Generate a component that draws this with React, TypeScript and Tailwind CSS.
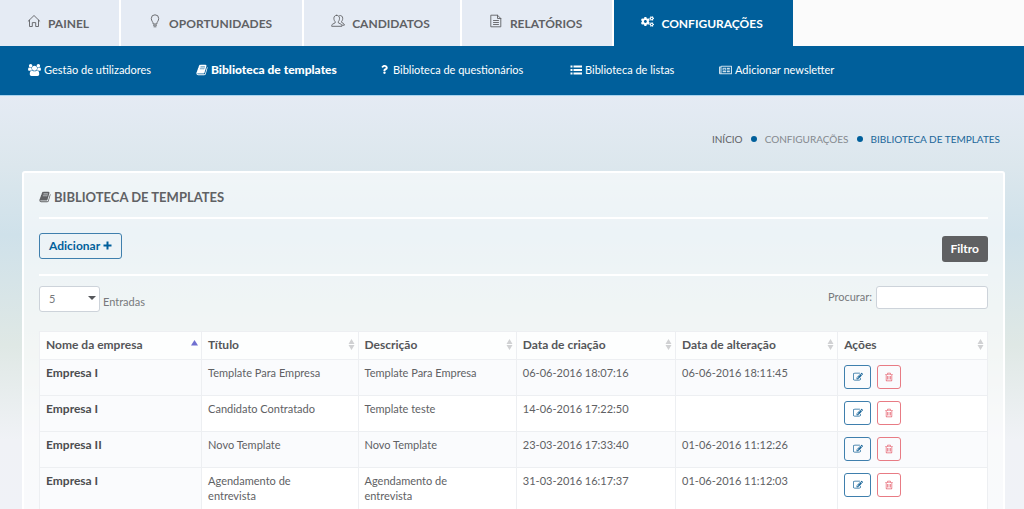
import type { ReactNode } from "react";
import { FaCogs, FaQuestion, FaRegNewspaper } from "react-icons/fa";

function UsersIcon() {
  return (
    <svg className="h-3 w-[13px] shrink-0" viewBox="0 0 1920 1792" fill="currentColor" aria-hidden="true">
      <path d="M593 896q-162 5-265 128h-134q-82 0-138-40.5t-56-118.5q0-353 124-353 6 0 43.5 21t97.5 42.5 119 21.5q67 0 133-23-5 37-5 66 0 139 81 256zm1071 637q0 120-73 189.5t-194 69.5h-874q-121 0-194-69.5t-73-189.5q0-53 3.5-103.5t14-109 26.5-108.5 43-97.5 62-81 85.5-53.5 111.5-20q10 0 43 21.5t73 48 107 48 135 21.5 135-21.5 107-48 73-48 43-21.5q61 0 111.5 20t85.5 53.5 62 81 43 97.5 26.5 108.5 14 109 3.5 103.5zm-1024-1277q0 106-75 181t-181 75-181-75-75-181 75-181 181-75 181 75 75 181zm704 384q0 159-112.5 271.5t-271.5 112.5-271.5-112.5-112.5-271.5 112.5-271.5 271.5-112.5 271.5 112.5 112.5 271.5zm576 225q0 78-56 118.5t-138 40.5h-134q-103-123-265-128 81-117 81-256 0-29-5-66 66 23 133 23 59 0 119-21.5t97.5-42.5 43.5-21q124 0 124 353zm-128-609q0 106-75 181t-181 75-181-75-75-181 75-181 181-75 181 75 75 181z" />
    </svg>
  );
}

function BookIcon() {
  return (
    <svg className="h-3 w-3 shrink-0" viewBox="0 0 1792 1792" fill="currentColor" aria-hidden="true">
      <path d="M520 400h760l-190 560H330z" opacity="0.45" />
      <path d="M1703 478q40 57 18 129l-275 906q-19 64-76.5 107.5t-122.5 43.5h-923q-77 0-148.5-53.5t-99.5-131.5q-24-67-2-127 0-4 3-27t4-37q1-8-3-21.5t-3-19.5q2-11 8-21t16.5-23.5 16.5-23.5q23-38 45-91.5t30-91.5q3-10 .5-30t-.5-28q3-11 17-28t17-23q21-36 42-92t25-90q1-9-2.5-32t.5-28q4-13 22-30.5t22-22.5q19-26 42.5-84.5t27.5-96.5q1-8-3-25.5t-2-26.5q2-8 9-18t18-23 17-21q8-12 16.5-30.5t15-35 16-36 19.5-32 26.5-23.5 36-11.5 47.5 5.5l-1 3q38-9 51-9h761q74 0 114 56t18 130l-274 906q-36 119-71.5 153.5t-128.5 34.5h-869q-27 0-38 15-11 16-1 43 24 70 144 70h923q29 0 56-15.5t35-41.5l300-987q7-22 5-57 38 15 59 43zm-1064 2q-4 13 2 22.5t20 9.5h608q13 0 25.5-9.5t16.5-22.5l21-64q4-13-2-22.5t-20-9.5h-608q-13 0-25.5 9.5t-16.5 22.5zm-83 256q-4 13 2 22.5t20 9.5h608q13 0 25.5-9.5t16.5-22.5l21-64q4-13-2-22.5t-20-9.5h-608q-13 0-25.5 9.5t-16.5 22.5z" />
    </svg>
  );
}

function ListIcon() {
  return (
    <svg className="h-3 w-3 shrink-0" viewBox="0 0 12 12" fill="currentColor" aria-hidden="true">
      <path d="M0.500 1.500h2v2h-2zM3.500 1.500h8.500v2h-8.500zM0.500 5h2v2h-2zM3.500 5h8.500v2h-8.500zM0.500 8.500h2v2h-2zM3.500 8.500h8.500v2h-8.500z" />
    </svg>
  );
}

function PlusIcon() {
  return (
    <svg className="h-[9px] w-[9px] shrink-0" viewBox="0 0 9 9" fill="currentColor" aria-hidden="true">
      <path d="M3.500 0.500h2v3h3v2h-3v3h-2v-3h-3v-2h3z" />
    </svg>
  );
}

function EditIcon() {
  return (
    <svg className="h-[10px] w-[10px]" viewBox="0 0 1792 1792" fill="currentColor" aria-hidden="true">
      <path d="M888 1184l116-116-152-152-116 116v56h96v96h56zm440-720q-16-16-33 1l-350 350q-17 17-1 33t33-1l350-350q17-17 1-33zm80 594v190q0 119-84.5 203.5t-203.5 84.5h-832q-119 0-203.5-84.5t-84.5-203.5v-832q0-119 84.5-203.5t203.5-84.5h832q63 0 117 25 15 7 18 23 3 17-9 29l-49 49q-14 14-32 8-23-6-45-6h-832q-66 0-113 47t-47 113v832q0 66 47 113t113 47h832q66 0 113-47t47-113v-126q0-13 9-22l64-64q15-15 35-7t20 29zm-96-738l288 288-672 672h-288v-288zm444 132l-92 92-288-288 92-92q28-28 68-28t68 28l152 152q28 28 28 68t-28 68z" />
    </svg>
  );
}

function TrashIcon() {
  return (
    <svg className="h-[10px] w-[10px]" viewBox="0 0 1792 1792" fill="currentColor" aria-hidden="true">
      <path d="M704 736v576q0 14-9 23t-23 9h-64q-14 0-23-9t-9-23v-576q0-14 9-23t23-9h64q14 0 23 9t9 23zm256 0v576q0 14-9 23t-23 9h-64q-14 0-23-9t-9-23v-576q0-14 9-23t23-9h64q14 0 23 9t9 23zm256 0v576q0 14-9 23t-23 9h-64q-14 0-23-9t-9-23v-576q0-14 9-23t23-9h64q14 0 23 9t9 23zm128 724v-948h-896v948q0 22 7 40.5t14.5 27 10.5 8.5h832q3 0 10.5-8.5t14.5-27 7-40.5zm-672-1076h448l-48-117q-7-9-17-11h-317q-10 2-17 11zm928 32v64q0 14-9 23t-23 9h-96v948q0 83-47 143.5t-113 60.5h-832q-66 0-113-58.5t-47-141.5v-952h-96q-14 0-23-9t-9-23v-64q0-14 9-23t23-9h309l70-167q15-37 54-63t79-26h320q40 0 79 26t54 63l70 167h309q14 0 23 9t9 23z" />
    </svg>
  );
}

function LineIcon({ children }: { children: ReactNode }) {
  return (
    <svg className="h-[14px] w-[14px] shrink-0" viewBox="0 0 14 14" fill="none" stroke="currentColor" strokeWidth="0.9" strokeLinejoin="round" strokeLinecap="round" aria-hidden="true">
      {children}
    </svg>
  );
}

const tabs: { label: string; icon: ReactNode; active?: boolean }[] = [
  { label: "PAINEL", icon: <LineIcon><path d="M1.200 7.200 7 1.500l5.800 5.700M2.500 6.200v6.300H5.300V8.600h3.400v3.900h2.800V6.200" /></LineIcon> },
  { label: "OPORTUNIDADES", icon: <LineIcon><path d="M5.200 9.600C5.200 7.800 3.300 7 3.300 4.500a3.700 3.700 0 0 1 7.400 0C10.700 7 8.800 7.800 8.800 9.600zM5.400 11.200h3.200M6 12.800h2" /></LineIcon> },
  { label: "CANDIDATOS", icon: <LineIcon><path d="M5.700 1.300c1.800 0 2.800 1.200 2.800 3 0 1.700-.6 2.700-1.200 3.400v1.100l2.600 1.300c.8.4 1 .9 1 2.200H.7c0-1.300.2-1.800 1-2.200l2.500-1.300V7.700C3.500 7 2.900 6 2.900 4.300c0-1.800 1-3 2.800-3zM8.700 1.500c1.700-.3 3 .9 3 2.900 0 1.500-.5 2.400-1.100 3v1l1.700.9c.8.4 1 .9 1 1.900h-1.800" /></LineIcon> },
  { label: "RELATÓRIOS", icon: <LineIcon><path d="M2.200 1.200h6.300l3.300 3.300v8.300H2.200zM8.500 1.200v3.300h3.300M4.500 6.500h5M4.500 8.500h5M4.500 10.500h5" /></LineIcon> },
  { label: "CONFIGURAÇÕES", active: true, icon: <FaCogs className="h-[13px] w-[13px] shrink-0" /> },
];

const subLinks: { label: string; icon: ReactNode; box: string; active?: boolean }[] = [
  { label: "Gestão de utilizadores", box: "w-[168px]", icon: <UsersIcon /> },
  { label: "Biblioteca de templates", box: "w-[184px]", active: true, icon: <BookIcon /> },
  { label: "Biblioteca de questionários", box: "w-[190px]", icon: <FaQuestion className="mr-[1px] h-[9px] w-[9px] shrink-0" /> },
  { label: "Biblioteca de listas", box: "w-[149px]", icon: <ListIcon /> },
  { label: "Adicionar newsletter", box: "", icon: <FaRegNewspaper className="h-3 w-[13px] shrink-0 opacity-80" /> },
];

const columns = [
  { label: "Nome da empresa", width: "w-[17.1%]" },
  { label: "Título", width: "w-[16.5%]" },
  { label: "Descrição", width: "w-[16.7%]" },
  { label: "Data de criação", width: "w-[16.8%]" },
  { label: "Data de alteração", width: "w-[17.1%]" },
  { label: "Ações", width: "" },
];

const rows = [
  ["Empresa I", "Template Para Empresa", "Template Para Empresa", "06-06-2016 18:07:16", "06-06-2016 18:11:45"],
  ["Empresa I", "Candidato Contratado", "Template teste", "14-06-2016 17:22:50", ""],
  ["Empresa II", "Novo Template", "Novo Template", "23-03-2016 17:33:40", "01-06-2016 11:12:26"],
  ["Empresa I", "Agendamento de entrevista", "Agendamento de entrevista", "31-03-2016 16:17:37", "01-06-2016 11:12:03"],
];

function SortMark({ active }: { active: boolean }) {
  return active ? (
    <svg className="mb-1 h-[6px] w-[7px] shrink-0" viewBox="0 0 7 6" aria-hidden="true">
      <path d="M3.500 0 7 5.500H0z" fill="#6f6fd0" />
    </svg>
  ) : (
    <svg className="h-[11px] w-[7px] shrink-0" viewBox="0 0 7 11" aria-hidden="true">
      <path d="M3.500 0 6.500 5h-6zM3.500 11l3-5h-6z" fill="#d0d1d3" />
    </svg>
  );
}

export default function App() {
  return (
    <div className="min-h-screen bg-[linear-gradient(180deg,#e5ebf4_95px,#dce7ed_165px,#cfe1ea_235px,#dfe8e5_345px,#f0f2f6_440px,#f0f2f7_509px)] font-['Lato','Open_Sans',sans-serif] text-[11px] leading-[15px] text-[#606164]">
      <header>
        <nav aria-label="Principal" className="flex h-[46px] bg-[#fbfbfb] text-[12px] font-bold">
          {tabs.map((tab) => (
            <a
              key={tab.label}
              href="#"
              className={`flex items-center gap-[7px] pr-[30px] pl-[27px] ${tab.active ? "bg-[#005f9b] text-white" : "border-r-2 border-white bg-[#e5ebf4]"}`}
            >
              <span className="pb-1">{tab.icon}</span>
              {tab.label}
            </a>
          ))}
        </nav>
        <nav aria-label="Configurações" className="flex h-[50px] items-center border-b border-[#a9d3ee] bg-[#005f9b] pb-[2px] pl-7 text-white">
          {subLinks.map((link) => (
            <a key={link.label} href="#" className={`flex shrink-0 items-center gap-[3px] ${link.box} ${link.active ? "text-[12px] font-black" : ""}`}>
              {link.icon}
              {link.label}
            </a>
          ))}
        </nav>
      </header>

      <nav aria-label="Localização" className="flex h-[75px] items-center justify-end gap-2 pt-[11px] pr-6 text-[10px]">
        <a href="#">INÍCIO</a>
        <span className="h-[6px] w-[6px] rounded-full bg-[#005f9b]" />
        <a href="#" className="text-[#84888e]">CONFIGURAÇÕES</a>
        <span className="h-[6px] w-[6px] rounded-full bg-[#005f9b]" />
        <a href="#" className="text-[#1a6699]">BIBLIOTECA DE TEMPLATES</a>
      </nav>

      <main className="mr-[19px] ml-[22px] rounded-[3px] border-2 border-white bg-white/60 px-[15px]">
        <h1 className="flex h-[46px] items-center gap-[3px] border-b-2 border-white pt-1 text-[13px] font-bold">
          <BookIcon />
          BIBLIOTECA DE TEMPLATES
        </h1>

        <div className="flex h-[57px] items-start justify-between border-b-2 border-white pt-[14px] text-[12px]">
          <button type="button" className="flex h-[26px] items-center gap-[3px] rounded-[3px] border border-[#3f7fad] px-[9px] pb-[2px] font-bold text-[#005f9b]">
            Adicionar
            <PlusIcon />
          </button>
          <button type="button" className="mt-[3px] h-[26px] rounded-[3px] bg-[#5f6062] px-[9px] pb-[2px] font-bold text-white">
            Filtro
          </button>
        </div>

        <div className="flex h-[55px] items-start justify-between pt-[10px] text-[#77797c]">
          <label className="flex items-center gap-[3px]">
            <span className="relative">
              <select className="h-[26px] w-[61px] appearance-none rounded-[3px] border border-[#cdd3da] bg-white pb-[2px] pl-[9px]" defaultValue="5">
                <option>5</option>
              </select>
              <svg className="pointer-events-none absolute top-[10px] right-1 h-1 w-2" viewBox="0 0 8 4" fill="#55565a" aria-hidden="true">
                <path d="M0 0h8L4 4z" />
              </svg>
            </span>
            <span className="pt-[5px]">Entradas</span>
          </label>
          <label className="flex items-center gap-1">
            <span className="pb-[3px]">Procurar:</span>
            <input type="search" className="h-[23px] w-[112px] rounded-[3px] border border-[#cdd3da] bg-white px-2" />
          </label>
        </div>

        <table className="mb-4 w-full table-fixed border-collapse bg-white">
          <thead>
            <tr className="h-7 bg-[#fdfefe]">
              {columns.map((column, index) => (
                <th key={column.label} className={`border border-[#edeff2] px-[6px] pt-0 pb-[2px] text-left text-[12px] text-[#555659] ${column.width}`}>
                  <span className="-mr-[3px] flex items-center justify-between">
                    {column.label}
                    <SortMark active={index === 0} />
                  </span>
                </th>
              ))}
            </tr>
          </thead>
          <tbody>
            {rows.map((row, rowIndex) => (
              <tr key={rowIndex} className="h-9 align-top odd:bg-[#fafbfd]">
                {row.map((cell, index) => (
                  <td key={index} className={`border border-[#edeff2] pt-[5px] pb-[6px] pl-[6px] ${index === 0 ? "bg-[#fafbfd] text-[12px] font-bold text-[#4c4d50]" : index < 3 ? "pr-8" : "pr-1 whitespace-nowrap"}`}>
                    {cell}
                  </td>
                ))}
                <td className="border border-[#edeff2] px-[6px] pt-[5px] pb-[6px]">
                  <div className="flex gap-[6px]">
                    <button type="button" aria-label="Editar" className="flex h-6 w-[27px] items-center justify-center rounded-[3px] border border-[#3f7fad] text-[#1a6699]">
                      <EditIcon />
                    </button>
                    <button type="button" aria-label="Eliminar" className="flex h-6 w-6 items-center justify-center rounded-[3px] border border-[#e87b84] text-[#e56370]">
                      <TrashIcon />
                    </button>
                  </div>
                </td>
              </tr>
            ))}
          </tbody>
        </table>
      </main>
    </div>
  );
}
